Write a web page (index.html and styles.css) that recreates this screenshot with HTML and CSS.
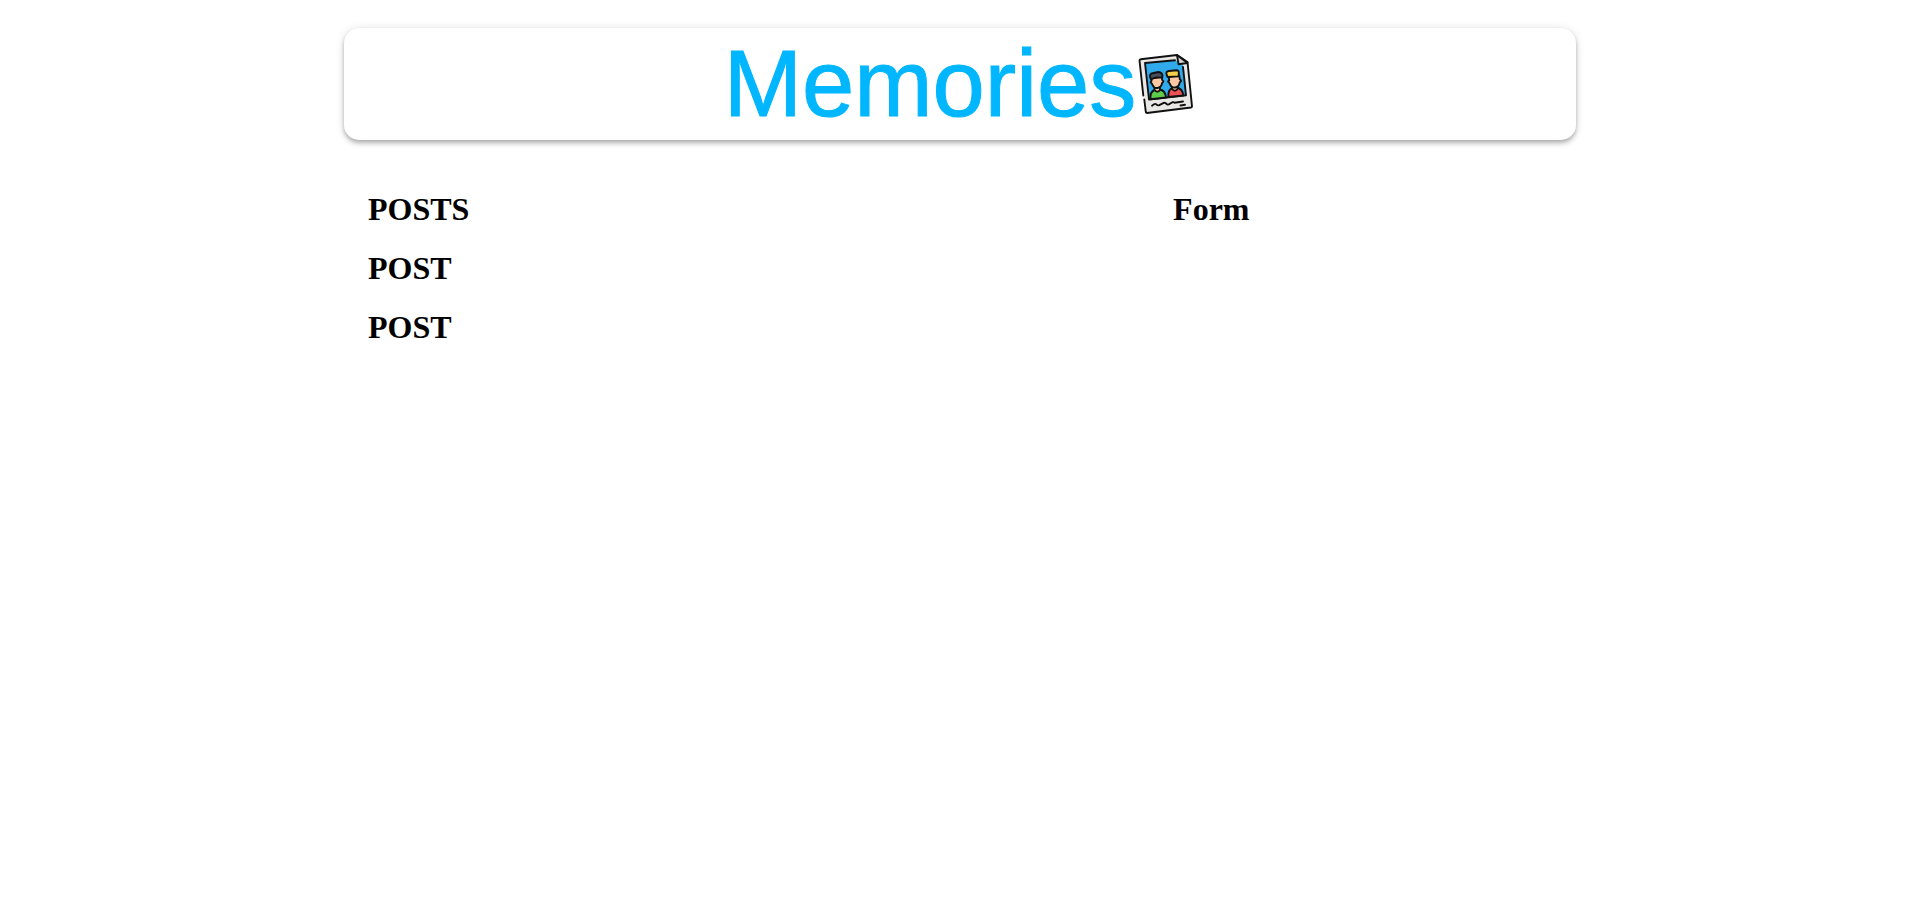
FILE: index.html
```html
<!DOCTYPE html>
<html lang="en">
<head>
  <meta charset="utf-8">
  <meta name="viewport" content="width=device-width, initial-scale=1">
  <title>Memories</title>
  <link rel="stylesheet" href="styles.css">
</head>
<body>
  <div class="container">
    <header class="app-bar">
      <h1 class="app-title">Memories</h1>
      <svg class="app-logo" viewBox="0 0 60 60" role="img" aria-label="memories" fill="none" stroke="#111" stroke-width="1.9" stroke-linecap="round" stroke-linejoin="round">
        <path d="M4 5.3 41 1l10.500 7L56.500 53.300 10 59Z" fill="#e9e8e6" stroke="none"/>
        <path d="M7.300 41.500 3.500 6.500Q3.500 5.300 4.700 5.200L41 1l10.500 7L56 52.300q0 1-1 1.200L11 59q-1 0-1.200-1L8.300 45.500"/>
        <path d="M9 9 39 6l8 5 3 30.300L13 45.500Z" fill="#30aaea" stroke="none"/>
        <path d="M39 6.300 9 9l4 36.500L50 41.300 47 13"/>
        <path d="M41 1l1.500 9.200 9-1.200Z" fill="#d2d0cd"/>
        <path d="M14.500 45.200c-.5-5 1-8 4-9.200l5-.5c4 .5 6 3.500 6.500 8Z" fill="#5dcb4c"/>
        <path d="M18.500 31v5q3 3.500 5.500 0V31" fill="#ffc8a5"/>
        <path d="M15.500 24.500v2.500q-2 1 .5 2.700 1.500 4.800 5.500 4.300t4.700-5.300q2.300-1.700 0-2.700l-.4-3.500Z" fill="#ffc8a5"/>
        <path d="M15 25.200q-3-5.700 2.500-6.200l5-1q5 1 3.800 5.600l-6-.2Z" fill="#46515b"/>
        <path d="M32.500 43c-.5-5 1-7.700 3.500-8.800l5-.5c4 .5 5.800 3.500 6.300 7.800Z" fill="#ee5055"/>
        <path d="M36 30.500v4.500q3 3.500 5.500 0V30.500" fill="#ffc8a5"/>
        <path d="M32.800 22.500l.4 4q-2.400 1 .4 2.700 1.500 4.800 5.500 4.300t4.700-5.300q2.500-1.700 0-2.900l-.5-3.800Z" fill="#ffc8a5"/>
        <path d="M31.500 23l-1-3q-.7-2.700 2.500-3l7.500-.8q2.600 0 2.300 3.200l-.2 3Z" fill="#f5cf4a"/>
        <path d="M16 51.700q3-2.700 4.300-1.300t3 .8l4.400-2.300q1.700-.6 2.800 1t3.500-.2l3-1.700 1.500.7 8.500-1.200M44.500 51.500l4.500-.7"/>
      </svg>
    </header>
    <main class="content">
      <section class="posts">
        <h1 class="heading">POSTS</h1>
        <h1 class="heading">POST</h1>
        <h1 class="heading">POST</h1>
      </section>
      <section class="form">
        <h1 class="heading">Form</h1>
      </section>
    </main>
  </div>
</body>
</html>
```
FILE: styles.css
```css
* {
  box-sizing: border-box;
}

body {
  margin: 0;
  padding-left: 6px;
  background: #fff;
  color: #000;
  font-family: "Liberation Serif", "Times New Roman", serif;
}

.container {
  max-width: 1280px;
  margin: 0 auto;
  padding: 28px 24px;
}

.app-bar {
  display: flex;
  justify-content: center;
  align-items: center;
  margin-bottom: 29px;
  border-radius: 15px;
  background: #fff;
  box-shadow:
    0 2px 4px -1px rgba(0, 0, 0, 0.2),
    0 4px 5px 0 rgba(0, 0, 0, 0.14),
    0 1px 10px 0 rgba(0, 0, 0, 0.12);
}

.app-title {
  margin: 0;
  color: #00b7ff;
  font-family: "Liberation Sans", Arial, sans-serif;
  font-size: 94px;
  font-weight: 300;
  line-height: 112px;
  -webkit-text-stroke: 1px #00b7ff;
}

.app-logo {
  width: 60px;
  height: 60px;
}

.content {
  display: grid;
  grid-template-columns: 17fr 8fr;
  padding: 0 24px;
}

.heading {
  margin: 22px 0;
  font-size: 32px;
  font-weight: 700;
  line-height: 37px;
}
```
